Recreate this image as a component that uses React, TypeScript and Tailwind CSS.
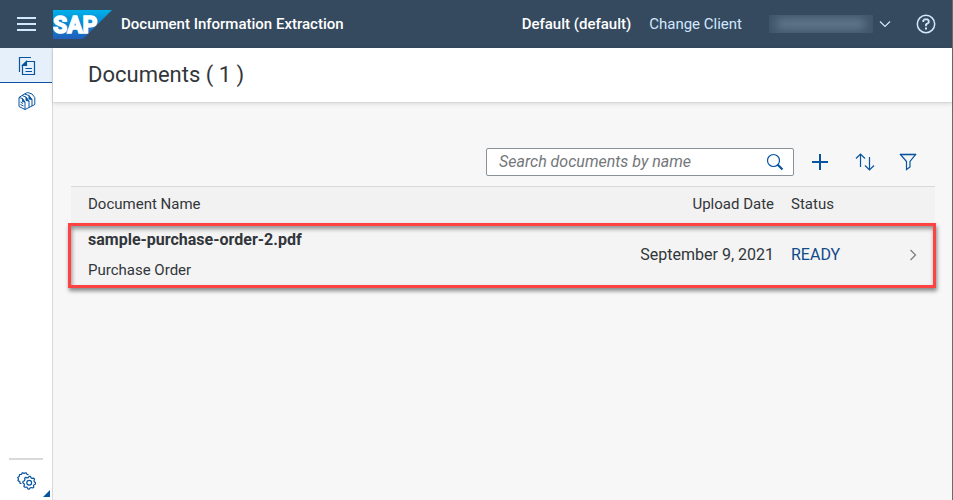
import React from 'react';

const stroke = {
  fill: 'none',
  stroke: 'currentColor',
  strokeWidth: 1.2,
};

function SapLogo() {
  return (
    <svg role="img" aria-label="SAP" width="59" height="29" viewBox="0 0 59 29" className="shrink-0">
      <defs>
        <linearGradient id="sap" x1="0" y1="0" x2="0" y2="1">
          <stop offset="0" stopColor="#00b1eb" />
          <stop offset="0.5" stopColor="#0a84d2" />
          <stop offset="1" stopColor="#1f5fbb" />
        </linearGradient>
      </defs>
      <path d="M0 0h59L30 29H0z" fill="url(#sap)" />
      <text x="0" y="23" fill="#fff" stroke="#fff" strokeWidth="1.500" className="font-['Roboto',sans-serif] text-[23px] font-bold">
        SAP
      </text>
    </svg>
  );
}

function DocumentsIcon() {
  return (
    <svg width="18" height="20" viewBox="0 0 18 20" {...stroke} aria-hidden="true">
      <path d="M1.500 16V1.500H13" />
      <path d="M4.500 9.500 8.500 5.500H16.500V18.500H4.500z" />
      <path d="M8.500 5.500V9.500H4.500z" fill="currentColor" />
      <path d="M7.500 12.500H14M7.500 15.500H14" />
    </svg>
  );
}

function SchemaIcon() {
  return (
    <svg width="18" height="20" viewBox="0 0 18 20" {...stroke} strokeWidth="1" strokeLinejoin="round" aria-hidden="true">
      <path d="M1 6.500 4.500 7.500 7 11V18.500L1 15.500z" />
      <path d="M1 6.500 4 4.500 8 6 11 10V16.500L7 18.500" />
      <path d="M4 4.500 6.500 3 11 4.500 14 8.500V15L11 16.500" />
      <path d="M6.500 3 9.500 1.500 14 3 16.800 6.500V13.500L14 15" />
      <path d="M4.500 7.500V10.500L7 11M8 6V9.500L11 10M11 4.500V8L14 8.500" fill="currentColor" />
      <path d="M2.500 11 5 12.500M2.500 13.500 5.500 15" />
    </svg>
  );
}

function SettingsIcon() {
  const teeth = Array.from({ length: 32 }, (_, i) => {
    const r = i % 4 < 2 ? 6.4 : 5.2;
    const a = (i * Math.PI) / 16;
    return `${(12.2 + r * Math.cos(a)).toFixed(2)},${(11.7 + r * Math.sin(a)).toFixed(2)}`;
  }).join(' ');
  return (
    <svg width="19" height="19" viewBox="0 0 19 19" {...stroke} strokeLinejoin="round" aria-hidden="true">
      <polygon points={teeth} />
      <circle cx="12.200" cy="11.700" r="2.400" />
      <path d="M4.500 12.500 3 12.300 2.800 10.600 1 9.700 1.500 8 .700 6.400 2.300 5.300 2.500 3.500 4.400 3.300 5.500 1.700 7.200 2.400 9 1.700 10 3.300 11.600 3.700" />
    </svg>
  );
}

function SearchIcon() {
  return (
    <svg width="18" height="18" viewBox="0 0 18 18" {...stroke} aria-hidden="true">
      <circle cx="7.500" cy="7.500" r="6" />
      <path d="m11.500 11.500 5 5" strokeWidth="2.200" />
    </svg>
  );
}

function SortIcon() {
  return (
    <svg width="20" height="20" viewBox="0 0 20 20" {...stroke} aria-hidden="true">
      <path d="M5.500 15V2.500M1 6.500l4.500-4.500L10 6.500M14.500 5v12.500M10 13.500l4.500 4.500 4.500-4.500" />
    </svg>
  );
}

function FilterIcon() {
  return (
    <svg width="18" height="18" viewBox="0 0 18 18" {...stroke} aria-hidden="true">
      <path d="M1.500 1.500h15L11 8.500v5.500L7.500 16.500V8.500z" />
      <path d="M1 1.500h16" strokeWidth="1.600" />
    </svg>
  );
}

function Chevron({ d, w, h }: { d: string; w: number; h: number }) {
  return (
    <svg width={w} height={h} viewBox={`0 0 ${w} ${h}`} {...stroke} aria-hidden="true">
      <path d={d} />
    </svg>
  );
}

function ShellBar() {
  return (
    <header className="flex h-12 shrink-0 items-center bg-[#354a5f] pr-4 text-[#d1e8ff]">
      <button type="button" aria-label="Menu" className="flex h-9 w-[53px] items-center justify-center">
        <svg width="19" height="14" viewBox="0 0 19 14" fill="currentColor" aria-hidden="true">
          <path d="M0 0h19v2H0zM0 6h19v2H0zM0 12h19v2H0z" />
        </svg>
      </button>
      <SapLogo />
      <h1 className="ml-[9px] text-[15px] font-medium whitespace-nowrap text-white">Document Information Extraction</h1>
      <div className="ml-auto flex items-center text-[15px] whitespace-nowrap">
        <span className="font-medium text-white">Default (default)</span>
        <button type="button" className="ml-[18px]">Change Client</button>
        <button type="button" aria-label="User menu" className="ml-[27px] flex items-center gap-1.5">
          <span className="flex h-[18px] w-[104px] items-center overflow-hidden bg-[#40566b]">
            <span className="mx-auto h-2.5 w-22 bg-[#647b90] blur-[5px]" />
          </span>
          <Chevron w={12} h={8} d="M1 1.500 6 6.500 11 1.500" />
        </button>
        <button type="button" aria-label="Help" className="ml-[25px]">
          <svg width="20" height="20" viewBox="0 0 20 20" {...stroke} strokeWidth="1.500" aria-hidden="true">
            <circle cx="10" cy="10" r="8.700" />
            <path d="M7.300 8V6.500L8.500 5.300h3l1.200 1.200v2L10 10.500v1.800" strokeWidth="1.800" />
            <path d="M10 13.500v2" strokeWidth="2" />
          </svg>
        </button>
      </div>
    </header>
  );
}

function SideNav() {
  return (
    <nav className="flex w-[53px] shrink-0 flex-col border-r border-[#d9d9d9] bg-white text-[#0854a0]">
      <a href="#documents" aria-label="Documents" className="flex h-[35px] items-center justify-center border-b border-[#0854a0] bg-[#e5f0fa] pt-0.5 pl-0.5">
        <DocumentsIcon />
      </a>
      <a href="#schemas" aria-label="Schema configuration" className="flex h-9 items-center justify-center pl-0.5">
        <SchemaIcon />
      </a>
      <div className="relative mt-auto">
        <div className="mx-[9px] h-0.5 bg-[#d9d9d9]" />
        <a href="#settings" aria-label="Settings" className="flex h-10 items-center justify-center">
          <SettingsIcon />
        </a>
        <svg className="absolute right-0.5 bottom-[3px]" width="7" height="7" viewBox="0 0 7 7" fill="currentColor" aria-hidden="true">
          <path d="M7 0v7H0z" />
        </svg>
      </div>
    </nav>
  );
}

function Toolbar() {
  return (
    <div className="flex items-center justify-end pr-[18px] text-[#0854a0]">
      <div className="flex h-7 w-[308px] items-center rounded-[2px] border border-[#89919a] bg-white pr-[9px]">
        <input
          type="search"
          aria-label="Search documents by name"
          placeholder="Search documents by name"
          className="min-w-0 flex-1 bg-transparent pl-3 text-[16px] italic outline-none placeholder:text-[#74777a]"
        />
        <button type="button" aria-label="Search">
          <SearchIcon />
        </button>
      </div>
      <button type="button" aria-label="Add" className="ml-[18px]">
        <svg width="16" height="16" viewBox="0 0 16 16" fill="currentColor" aria-hidden="true">
          <path d="M7 0h2v7h7v2H9v7H7V9H0V7h7z" />
        </svg>
      </button>
      <button type="button" aria-label="Sort" className="ml-[27px]">
        <SortIcon />
      </button>
      <button type="button" aria-label="Filter" className="ml-6">
        <FilterIcon />
      </button>
    </div>
  );
}

function DocumentTable() {
  return (
    <div className="relative mt-2.5">
      <table className="w-full table-fixed border-collapse text-[15px] leading-5">
        <colgroup>
          <col />
          <col className="w-[200px]" />
          <col className="w-[100px]" />
          <col className="w-[52px]" />
        </colgroup>
        <thead>
          <tr className="h-[37px] border-y border-[#d9d9d9] bg-[#f2f2f2]">
            <th scope="col" className="pb-0.5 pl-[17px] text-left font-normal">Document Name</th>
            <th scope="col" className="pr-[9px] pb-0.5 text-right font-normal">Upload Date</th>
            <th scope="col" className="pb-0.5 pl-2 text-left font-normal">Status</th>
            <th aria-label="Open" />
          </tr>
        </thead>
        <tbody>
          <tr className="h-[62px] border-b border-[#d9d9d9] bg-[#f4f4f4] text-[16px]">
            <td className="pl-[17px]">
              <div className="flex flex-col gap-2.5">
                <b>sample-purchase-order-2.pdf</b>
                <span className="text-[15px]">Purchase Order</span>
              </div>
            </td>
            <td className="pr-[9px] text-right">September 9, 2021</td>
            <td className="pl-2 text-[#0f4a8a]">READY</td>
            <td className="pr-[18px] text-[#7a7d80]">
              <div className="flex justify-end">
                <Chevron w={8} h={12} d="M1.500 1 6.500 6 1.500 11" />
              </div>
            </td>
          </tr>
        </tbody>
      </table>
      <div className="pointer-events-none absolute top-[37px] -right-px -bottom-0.5 -left-[3px] border-3 border-[#ff4343] shadow-[1px_3px_4px_rgba(0,0,0,0.45),inset_1px_3px_4px_rgba(0,0,0,0.4)]" />
    </div>
  );
}

export default function App() {
  return (
    <div className="flex min-h-screen flex-col border-r border-[#6b6b6b] bg-[#f7f7f7] font-['Roboto',sans-serif] text-[#32363a]">
      <ShellBar />
      <div className="flex flex-1">
        <SideNav />
        <main className="min-w-0 flex-1">
          <div className="flex h-[55px] items-center border-b border-[#d9d9d9] bg-white pb-0.5 pl-[35px] shadow-[0_1px_4px_rgba(0,0,0,0.12)]">
            <h2 className="text-[22px]">Documents ( 1 )</h2>
          </div>
          <section className="pt-[45px] pr-[17px] pl-[18px]">
            <Toolbar />
            <DocumentTable />
          </section>
        </main>
      </div>
    </div>
  );
}
